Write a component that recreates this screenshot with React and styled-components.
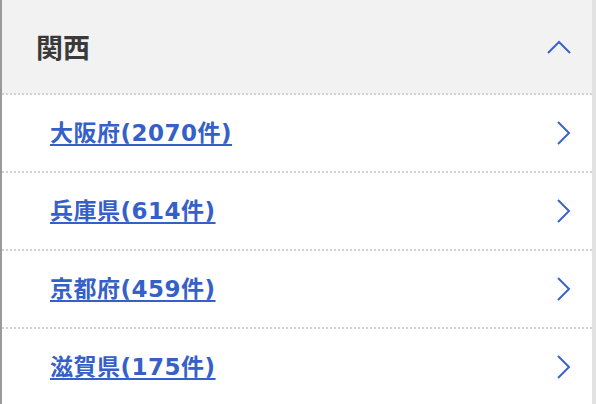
import React from 'react';
import styled, { createGlobalStyle } from 'styled-components';

const GlobalStyle = createGlobalStyle`
  html, body {
    margin: 0;
    padding: 0;
    background: #ffffff;
  }
  body {
    font-family: "Noto Sans CJK JP", "Liberation Sans", sans-serif;
  }
`;

const StyledPanel = styled.section`
  width: 596px;
  height: 404px;
  box-sizing: border-box;
  border-left: 2px solid #9a9a9a;
  border-right: 4px solid #e2e2e2;
  background: #ffffff;
  overflow: hidden;
`;

const StyledHeader = styled.div`
  display: flex;
  justify-content: space-between;
  align-items: center;
  height: 93px;
  padding: 0 21px 0 34px;
  background: #f2f2f2;
  border-bottom: 2px dotted #d2d2d2;
`;

const StyledTitle = styled.h2`
  margin: 0;
  font-size: 27px;
  font-weight: 700;
  color: #3a3a3a;
`;

const StyledList = styled.ul`
  margin: 0;
  padding: 0;
  list-style: none;
`;

const StyledRow = styled.li`
  display: flex;
  justify-content: space-between;
  align-items: center;
  height: 76px;
  padding: 0 21px 0 48px;
  border-bottom: 2px dotted #d2d2d2;
`;

const StyledLink = styled.a`
  font-family: "DejaVu Sans", "Noto Sans CJK JP", sans-serif;
  color: #3560c8;
  font-size: 23px;
  font-weight: 700;
  line-height: 1.4;
  letter-spacing: 0.5px;
  text-decoration: underline;
  text-decoration-thickness: 2px;
  text-underline-offset: 3px;
`;

const Chevron = ({ dir }) => (
  dir === 'up' ? (
    <svg width="24" height="14" viewBox="0 0 24 14" fill="none">
      <path d="M1 13 L12 2 L23 13" stroke="#3b63d0" strokeWidth="2" />
    </svg>
  ) : (
    <svg width="14" height="24" viewBox="0 0 14 24" fill="none">
      <path d="M1 1 L12 12 L1 23" stroke="#3b63d0" strokeWidth="2" />
    </svg>
  )
);

const prefectures = [
  { name: '大阪府', count: 2070 },
  { name: '兵庫県', count: 614 },
  { name: '京都府', count: 459 },
  { name: '滋賀県', count: 175 },
];

const App = () => (
  <>
    <GlobalStyle />
    <StyledPanel>
      <StyledHeader>
        <StyledTitle>関西</StyledTitle>
        <Chevron dir="up" />
      </StyledHeader>
      <StyledList>
        {prefectures.map((p) => (
          <StyledRow key={p.name}>
            <StyledLink href="#">{`${p.name}(${p.count}件)`}</StyledLink>
            <Chevron />
          </StyledRow>
        ))}
      </StyledList>
    </StyledPanel>
  </>
);

export default App;
